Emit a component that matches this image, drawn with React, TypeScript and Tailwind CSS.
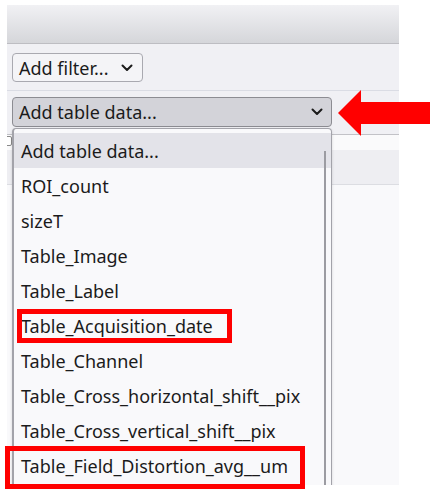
import { ReactNode } from "react";

const items = [
  "Add table data...",
  "ROI_count",
  "sizeT",
  "Table_Image",
  "Table_Label",
  "Table_Acquisition_date",
  "Table_Channel",
  "Table_Cross_horizontal_shift__pix",
  "Table_Cross_vertical_shift__pix",
  "Table_Field_Distortion_avg__um",
];

function Chevron() {
  return (
    <svg width="12" height="8" viewBox="0 0 12 8" className="shrink-0">
      <polyline
        points="1.5,1.5 6,6 10.5,1.5"
        fill="none"
        stroke="#1b1b1b"
        strokeWidth="2"
        strokeLinecap="round"
        strokeLinejoin="round"
      />
    </svg>
  );
}

function RedBox({ className, children }: { className: string; children?: ReactNode }) {
  return (
    <div className={`pointer-events-none absolute border-[5px] border-[#ff0000] ${className}`}>
      {children}
    </div>
  );
}

export default function App() {
  return (
    <div className="relative h-[496px] w-[435px] overflow-hidden bg-white font-['Noto_Sans',sans-serif] text-[18px] text-[#1b1b1b]">
      <div className="relative ml-[7px] mt-[5px] flex h-[480px] w-[392px] flex-col overflow-hidden bg-[#f0f0f4]">
        {/* tab header */}
        <div className="h-[39px] shrink-0 border-b border-[#bdbdc2] bg-gradient-to-b from-[#f1f1f4] to-[#d5d6da]" />

        {/* filter row */}
        <div className="h-[46px] shrink-0 px-[5px] pt-[9px]">
          <button
            type="button"
            className="flex h-[29px] w-[131px] items-center justify-between rounded-[4px] border border-[#a9a9b0] bg-[#f4f4f7] pl-[6px] pr-[9px] leading-none"
          >
            <span>Add filter...</span>
            <Chevron />
          </button>
        </div>
        <div className="h-px shrink-0 bg-[#dadce4]" />

        {/* table data select */}
        <div className="h-[43px] shrink-0 px-[5px] pt-[6px]">
          <button
            type="button"
            className="flex h-[30px] w-[320px] items-center justify-between rounded-[4px] border border-[#8c8c92] bg-[#d3d3d9] pl-[6px] pr-[8px] leading-none"
          >
            <span>Add table data...</span>
            <Chevron />
          </button>
        </div>
        <div className="h-px shrink-0 bg-[#c2c2c7]" />

        {/* table area behind the open list */}
        <div className="flex h-[15px] shrink-0 items-start bg-[#fafafb] pt-[1px]">
          <div className="-ml-[3px] h-[10px] w-[8px] rounded-[2px] border border-[#8a8a8a] bg-white" />
        </div>
        <div className="h-[35px] shrink-0 border-b border-[#dcdde2] bg-[#eeeef2]" />
        <div className="flex-1 bg-[#f9f9fb]" />

        {/* open dropdown */}
        <div className="absolute left-[5px] top-[123px] h-[380px] w-[320px] rounded-t-[4px] border border-l-2 border-[#a3a3aa] bg-[#f9f9fb] pt-[4px] shadow-[0_1px_3px_rgba(0,0,0,0.15)]">
          <ul>
            {items.map((it, i) => (
              <li
                key={it}
                className={`flex h-[35px] items-center pl-[7px] leading-none ${
                  i === 0 ? "bg-[#e3e3e9]" : ""
                }`}
              >
                {it}
              </li>
            ))}
          </ul>
          <div className="absolute right-[5px] top-[22px] h-[360px] w-[2px] bg-[#9c9ca2]" />
        </div>
      </div>

      {/* annotations */}
      <RedBox className="left-[17px] top-[309px] h-[34px] w-[215px]" />
      <RedBox className="left-[5px] top-[446px] h-[43px] w-[300px]" />
      <svg
        className="pointer-events-none absolute left-[338px] top-[90px]"
        width="92"
        height="46"
        viewBox="0 0 92 46"
      >
        <polygon points="0,23 23,0 23,12 92,12 92,34 23,34 23,46" fill="#ff0000" />
      </svg>
    </div>
  );
}
